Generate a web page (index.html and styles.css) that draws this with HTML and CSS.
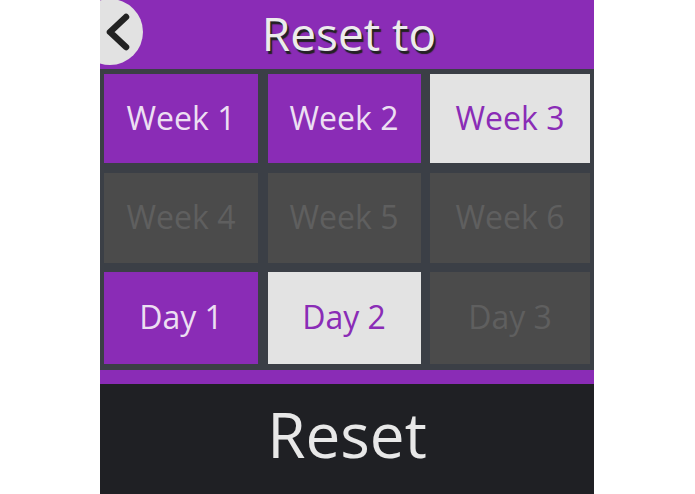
FILE: index.html
```html
<!DOCTYPE html>
<html lang="en">
<head>
    <meta charset="UTF-8">
    <meta name="viewport" content="width=device-width, initial-scale=1.0">
    <title>Reset to</title>
    <link rel="stylesheet" href="styles.css">
</head>
<body>

    <div class="panel">
        <div class="header">
            <button class="back-button">
                <svg width="26" height="40" viewBox="0 0 26 40">
                    <polyline points="21,5 5,20 21,35" fill="none" stroke="#222" stroke-width="6.5" stroke-linecap="round" stroke-linejoin="round"/>
                </svg>
            </button>
            <h1 class="title">Reset to</h1>
        </div>

        <div class="grid">
            <button class="cell on">Week 1</button>
            <button class="cell on">Week 2</button>
            <button class="cell selected">Week 3</button>
            <button class="cell off">Week 4</button>
            <button class="cell off">Week 5</button>
            <button class="cell off">Week 6</button>
            <button class="cell on">Day 1</button>
            <button class="cell selected">Day 2</button>
            <button class="cell off">Day 3</button>
        </div>

        <div class="strip"></div>

        <button class="reset-button">Reset</button>
    </div>

</body>
</html>
```

FILE: styles.css
```css
body {
    margin: 0;
    background: #fff;
    font-family: "Open Sans", "Noto Sans", sans-serif;
}

.panel {
    width: 494px;
    height: 494px;
    margin-left: 100px;
    background-color: #3b3f46;
    display: flex;
    flex-direction: column;
    overflow: hidden;
}

.header {
    position: relative;
    height: 69px;
    background-color: #8a2cb6;
    display: flex;
    align-items: center;
    justify-content: center;
}

.back-button {
    position: absolute;
    left: -23px;
    top: -1px;
    width: 66px;
    height: 66px;
    border-radius: 50%;
    border: none;
    background-color: #e2e2e2;
    padding: 0 0 0 16px;
    display: flex;
    align-items: center;
    justify-content: center;
    cursor: pointer;
}

.title {
    margin: 0 0 3px 4px;
    font-size: 46px;
    font-weight: normal;
    color: #ececec;
    text-shadow: 2px 3px 1px #222;
}

.grid {
    display: grid;
    grid-template-columns: 154px 153px 160px;
    grid-template-rows: 89px 90px 92px;
    column-gap: 9.5px;
    row-gap: 9.5px;
    padding: 5px 4px 6px 4px;
}

.cell {
    border: none;
    font-family: "Open Sans", "Noto Sans", sans-serif;
    font-size: 32px;
    padding: 0 0 3px 0;
    cursor: pointer;
}

.cell.on {
    background-color: #8a2cb6;
    color: #ecdff2;
}

.cell.selected {
    background-color: #e3e3e3;
    color: #8a2cb6;
}

.cell.off {
    background-color: #4b4b4b;
    color: #5f5f5f;
}

.strip {
    height: 14px;
    background-color: #8a2cb6;
}

.reset-button {
    flex: 1;
    border: none;
    background-color: #1f2024;
    color: #e8e8e8;
    font-family: "Open Sans", "Noto Sans", sans-serif;
    font-size: 62px;
    padding: 0 0 10px 0;
    cursor: pointer;
}
```
